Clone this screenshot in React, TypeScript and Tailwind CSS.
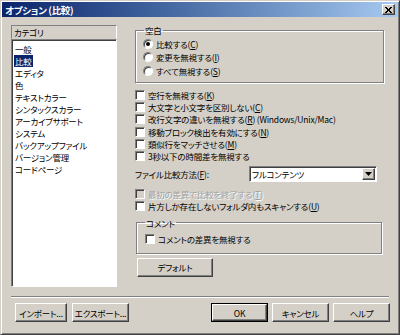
import React from "react";

const font = "font-['Noto_Sans_CJK_JP','Noto_Sans_CJK_SC',sans-serif] [font-feature-settings:'palt']";
const raised =
  "bg-[#d4d0c8] border border-t-white border-l-white border-r-[#404040] border-b-[#404040] shadow-[inset_-1px_-1px_0_#808080]";
const sunken =
  "border border-t-[#808080] border-l-[#808080] border-r-white border-b-white shadow-[inset_1px_1px_0_#404040]";
const etched =
  "border border-[#808080] shadow-[inset_1px_1px_0_#fff,1px_1px_0_#fff]";

const Acc = ({ text, k }: { text: string; k: string }) => (
  <span>
    {text}(<u>{k}</u>)
  </span>
);

const CheckBox = ({ children, disabled }: { children: any; disabled?: boolean }) => (
  <div className="flex items-center h-[12.2px]">
    <span className={`w-[10px] h-[10px] shrink-0 ${sunken} ${disabled ? "bg-[#d4d0c8]" : "bg-white"}`} />
    <span
      className={`ml-[3px] whitespace-nowrap ${
        disabled ? "text-[#a0a0a0] [text-shadow:1px_1px_0_#fff]" : "text-black"
      }`}
    >
      {children}
    </span>
  </div>
);

const Radio = ({ children, checked }: { children: any; checked?: boolean }) => (
  <div className="flex items-center h-[13.5px]">
    <span className="w-[10px] h-[10px] rounded-full bg-white border border-t-[#808080] border-l-[#808080] border-r-white border-b-white shadow-[inset_1px_1px_0_#404040] flex items-center justify-center shrink-0">
      {checked && <span className="w-[4px] h-[4px] rounded-full bg-black" />}
    </span>
    <span className="ml-[3px] whitespace-nowrap">{children}</span>
  </div>
);

const Btn = ({ children, w, def }: { children: any; w: string; def?: boolean }) =>
  def ? (
    <div className={`${w} h-[19px] border border-black flex`}>
      <div className={`${raised} flex-1 flex items-center justify-center`}>{children}</div>
    </div>
  ) : (
    <div className={`${w} h-[19px] ${raised} flex items-center justify-center`}>{children}</div>
  );

const categories = [
  "一般",
  "比較",
  "エディタ",
  "色",
  "テキストカラー",
  "シンタックスカラー",
  "アーカイブサポート",
  "システム",
  "バックアップファイル",
  "バージョン管理",
  "コードページ",
];

export default function App() {
  return (
    <div
      className={`${font} w-[400px] h-[335px] bg-[#d4d0c8] border border-t-[#d4d0c8] border-l-[#d4d0c8] border-r-[#404040] border-b-[#404040] shadow-[inset_1px_1px_0_#fff,inset_-1px_-1px_0_#808080] flex flex-col text-[8.5px] leading-[12px] tracking-[-0.2px] text-black`}
    >
      {/* title bar */}
      <div className="mx-[1px] mt-[1px] h-[15px] bg-gradient-to-r from-[#0a246a] to-[#a6caf0] flex items-center justify-between pl-[3px] pr-[3px]">
        <span className="text-white font-bold text-[9.5px] leading-[12px] tracking-[-0.3px]">オプション (比較)</span>
        <span className={`${raised} w-[13px] h-[11px] flex items-center justify-center`}>
          <svg width="7" height="6" viewBox="0 0 7 6">
            <path d="M0 0L6 6M1 0L7 6M6 0L0 6M7 0L1 6" stroke="black" strokeWidth="1" />
          </svg>
        </span>
      </div>

      {/* body */}
      <div className="flex h-[273px] pl-[10px] pt-[8px]">
        {/* categories */}
        <div className="w-[106px] flex flex-col">
          <div className="h-[14px] border border-t-[#808080] border-l-[#808080] border-r-white border-b-[#d4d0c8] flex items-center pl-[2px]">
            カテゴリ
          </div>
          <div className={`h-[248px] bg-white ${sunken} border-b-[#e8e6e0] pl-[3px] pt-[3px]`}>
            {categories.map((c, i) => (
              <div key={c} className="h-[12px] flex items-center">
                <span className={i === 1 ? "bg-[#0a246a] text-white px-[1px] -mx-[1px]" : ""}>{c}</span>
              </div>
            ))}
          </div>
        </div>

        {/* right side */}
        <div className="ml-[18px] w-[249px] flex flex-col">
          <fieldset className={`${etched} h-[59px] -mt-[1px] pl-[7px] pr-[6px]`}>
            <legend className="ml-[1px] px-[1px] leading-[12px]">空白</legend>
            <div className="mt-[1px]">
              <Radio checked>
                <Acc text="比較する" k="C" />
              </Radio>
              <Radio>
                <Acc text="変更を無視する" k="I" />
              </Radio>
              <Radio>
                <Acc text="すべて無視する" k="S" />
              </Radio>
            </div>
          </fieldset>

          <div className="mt-[6px]">
            <CheckBox>
              <Acc text="空行を無視する" k="K" />
            </CheckBox>
            <CheckBox>
              <Acc text="大文字と小文字を区別しない" k="C" />
            </CheckBox>
            <CheckBox>
              <Acc text="改行文字の違いを無視する" k="R" /> (Windows/Unix/Mac)
            </CheckBox>
            <CheckBox>
              <Acc text="移動ブロック検出を有効にする" k="N" />
            </CheckBox>
            <CheckBox>
              <Acc text="類似行をマッチさせる" k="M" />
            </CheckBox>
            <CheckBox>3秒以下の時間差を無視する</CheckBox>
          </div>

          <div className="flex items-center justify-between mt-[4px] pr-[7px]">
            <span>
              ファイル比較方法(<u>F</u>):
            </span>
            <div className={`w-[128px] h-[16px] bg-white ${sunken} flex items-center justify-between`}>
              <span className="pl-[2px]">フルコンテンツ</span>
              <span className={`${raised} w-[13px] h-[12px] mr-[1px] flex items-center justify-center`}>
                <svg width="7" height="4" viewBox="0 0 7 4">
                  <path d="M0 0H7L3.5 4Z" fill="black" />
                </svg>
              </span>
            </div>
          </div>

          <div className="mt-[6px]">
            <CheckBox disabled>
              <Acc text="最初の差異で比較を終了する" k="T" />
            </CheckBox>
            <CheckBox>
              <Acc text="片方しか存在しないフォルダ内もスキャンする" k="U" />
            </CheckBox>
          </div>

          <fieldset className={`${etched} h-[37px] mt-[4px] ml-[1px] mr-[2px] pl-[8px]`}>
            <legend className="px-[1px] leading-[12px]">コメント</legend>
            <div className="mt-[4px]">
              <CheckBox>コメントの差異を無視する</CheckBox>
            </div>
          </fieldset>

          <div className="mt-[4px] ml-[2px]">
            <Btn w="w-[76px]">デフォルト</Btn>
          </div>
        </div>
      </div>

      {/* separator */}
      <div className="mx-[10px] mt-[6px] h-[2px] border-t border-t-[#808080] border-b border-b-white" />

      {/* bottom buttons */}
      <div className="flex items-center pl-[14px] pr-[9px] mt-[5px]">
        <Btn w="w-[52px]">インポート...</Btn>
        <div className="ml-[5px]">
          <Btn w="w-[57px]">エクスポート...</Btn>
        </div>
        <div className="flex-1" />
        <Btn w="w-[57px]" def>
          OK
        </Btn>
        <div className="ml-[4px]">
          <Btn w="w-[57px]">キャンセル</Btn>
        </div>
        <div className="ml-[4px]">
          <Btn w="w-[57px]">ヘルプ</Btn>
        </div>
      </div>
    </div>
  );
}
